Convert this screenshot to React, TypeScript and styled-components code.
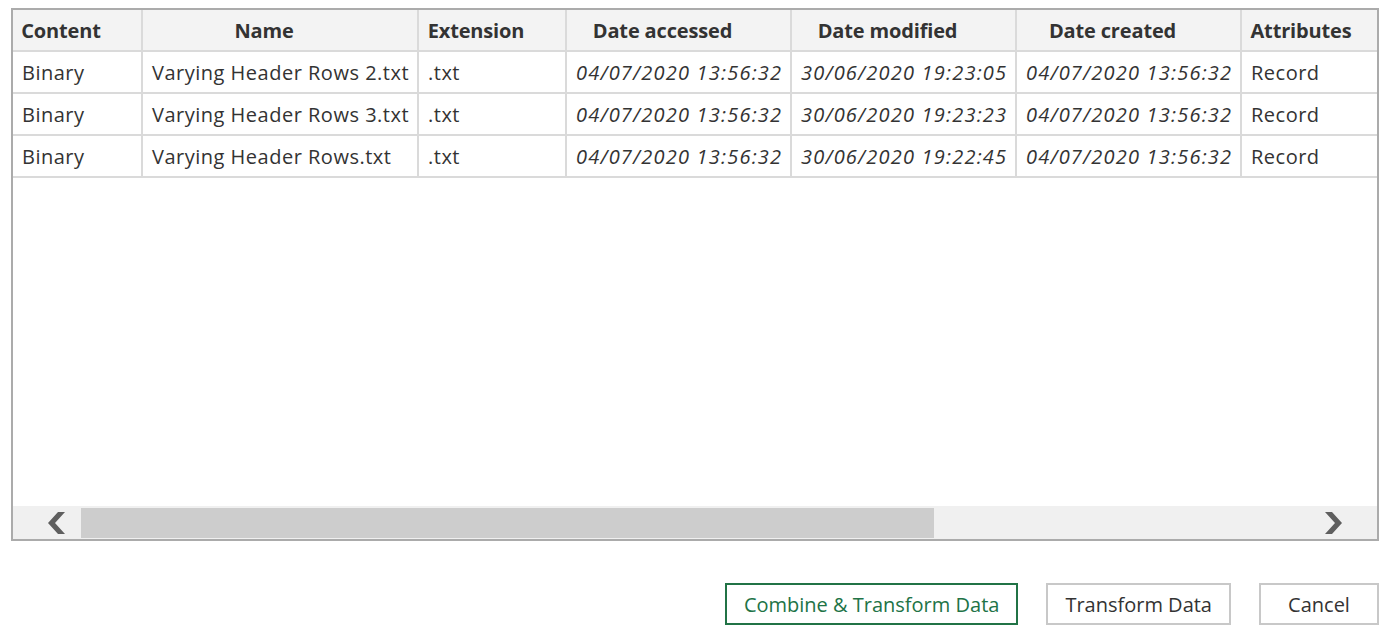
import React from 'react';
import styled, {createGlobalStyle} from 'styled-components';

const GlobalStyle = createGlobalStyle`
  body {
    margin: 0;
    background: #ffffff;
    font-family: 'Open Sans', 'Noto Sans', sans-serif;
    color: #333333;
  }
`;

const COLUMNS = [
  {title: 'Content', width: 130},
  {title: 'Name', width: 276},
  {title: 'Extension', width: 148},
  {title: 'Date accessed', width: 225},
  {title: 'Date modified', width: 225},
  {title: 'Date created', width: 225},
  {title: 'Attributes', width: 152},
];

const ROWS = [
  [
    'Binary',
    'Varying Header Rows 2.txt',
    '.txt',
    '04/07/2020 13:56:32',
    '30/06/2020 19:23:05',
    '04/07/2020 13:56:32',
    'Record',
  ],
  [
    'Binary',
    'Varying Header Rows 3.txt',
    '.txt',
    '04/07/2020 13:56:32',
    '30/06/2020 19:23:23',
    '04/07/2020 13:56:32',
    'Record',
  ],
  [
    'Binary',
    'Varying Header Rows.txt',
    '.txt',
    '04/07/2020 13:56:32',
    '30/06/2020 19:22:45',
    '04/07/2020 13:56:32',
    'Record',
  ],
];

const DATE_COLUMNS = [3, 4, 5];

export default function App() {
  const template = COLUMNS.map((c) => `${c.width}px`).join(' ');

  return (
    <Page>
      <GlobalStyle />
      <Frame>
        <GridArea>
          <Grid $template={template}>
            {COLUMNS.map((c) => (
              <HeaderCell key={c.title}>{c.title}</HeaderCell>
            ))}
            {ROWS.map((row, r) =>
              row.map((value, i) => (
                <Cell key={`${r}-${i}`} $italic={DATE_COLUMNS.includes(i)}>
                  {value}
                </Cell>
              )),
            )}
          </Grid>
        </GridArea>

        <ScrollBar>
          <ArrowButton $side='left'>
            <Chevron direction='left' />
          </ArrowButton>
          <Track>
            <Thumb style={{width: '69.5%'}} />
          </Track>
          <ArrowButton $side='right'>
            <Chevron direction='right' />
          </ArrowButton>
        </ScrollBar>
      </Frame>

      <Actions>
        <Button $primary>Combine &amp; Transform Data</Button>
        <Button>Transform Data</Button>
        <Button>Cancel</Button>
      </Actions>
    </Page>
  );
}

const Chevron = ({direction}: {direction: 'left' | 'right'}) => (
  <svg width='18' height='22' viewBox='0 0 18 22'>
    <polygon
      fill='#5f5f5f'
      points={
        direction === 'left'
          ? '11,0 18,0 8,11 18,22 11,22 1,11'
          : '7,0 0,0 10,11 0,22 7,22 17,11'
      }
    />
  </svg>
);

const Page = styled.div`
  padding: 8px 17px 0 11px;
`;

const Frame = styled.div`
  height: 533px;
  box-sizing: border-box;
  border: 2px solid #ababab;
  display: flex;
  flex-direction: column;
  overflow: hidden;
`;

const GridArea = styled.div`
  flex: 1;
  overflow: hidden;
`;

const Grid = styled.div<{$template: string}>`
  display: grid;
  grid-template-columns: ${(p) => p.$template};
  grid-auto-rows: 42px;
  width: max-content;
`;

const HeaderCell = styled.div`
  box-sizing: border-box;
  display: flex;
  align-items: center;
  justify-content: center;
  padding: 0 32px 0 0;
  background: #f3f3f3;
  border-right: 2px solid #dadada;
  border-bottom: 2px solid #dadada;
  font-size: 20px;
  font-weight: 700;
  letter-spacing: -0.15px;
  color: #333333;
  white-space: nowrap;
  overflow: hidden;
`;

const Cell = styled.div<{$italic?: boolean}>`
  box-sizing: border-box;
  display: flex;
  align-items: center;
  padding: 0 9px;
  border-right: 2px solid #dadada;
  border-bottom: 2px solid #dadada;
  font-size: 20px;
  font-style: ${(p) => (p.$italic ? 'italic' : 'normal')};
  letter-spacing: ${(p) => (p.$italic ? '1.2px' : '0.5px')};
  color: #333333;
  white-space: nowrap;
  overflow: hidden;
`;

const ScrollBar = styled.div`
  height: 33px;
  flex-shrink: 0;
  display: flex;
  background: #f0f0f0;
`;

const ArrowButton = styled.div<{$side: 'left' | 'right'}>`
  width: 68px;
  box-sizing: border-box;
  display: flex;
  align-items: center;
  justify-content: ${(p) => (p.$side === 'left' ? 'flex-start' : 'flex-end')};
  padding: ${(p) => (p.$side === 'left' ? '0 0 0 34px' : '0 34px 0 0')};
`;

const Track = styled.div`
  flex: 1;
  display: flex;
  padding: 2px 0 1px;
`;

const Thumb = styled.div`
  background: #cdcdcd;
`;

const Actions = styled.div`
  display: flex;
  justify-content: flex-end;
  gap: 28px;
  margin-top: 42px;
`;

const Button = styled.button<{$primary?: boolean}>`
  height: 42px;
  min-width: 120px;
  box-sizing: border-box;
  padding: 0 17px;
  background: #ffffff;
  border: 2px solid ${(p) => (p.$primary ? '#217346' : '#c8c8c8')};
  color: ${(p) => (p.$primary ? '#217346' : '#333333')};
  font-family: 'Open Sans', 'Noto Sans', sans-serif;
  font-size: 20px;
  cursor: pointer;
`;
